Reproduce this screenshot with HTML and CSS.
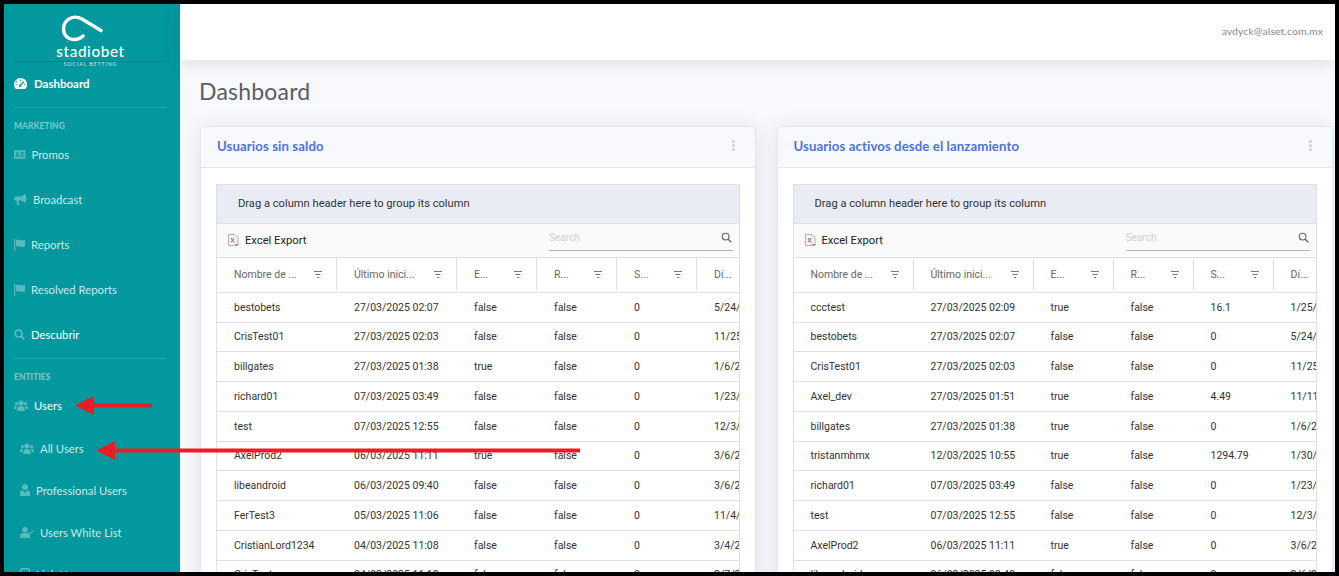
FILE: index.html
```html
<!DOCTYPE html>
<html lang="es">
<head>
<meta charset="utf-8">
<title>Dashboard</title>
<link rel="stylesheet" href="styles.css">
</head>
<body>
<svg class="sprite" width="0" height="0">
  <symbol id="i-filter" viewBox="0 0 8 7"><path d="M0 .5h8M1.500 3.500h5M3 6.500h2" stroke="currentColor" stroke-width="1.100" fill="none"/></symbol>
  <symbol id="i-search" viewBox="0 0 12 12"><circle cx="5" cy="5" r="3.700" fill="none" stroke="currentColor" stroke-width="1.200"/><path d="M7.800 7.800l3.400 3.400" stroke="currentColor" stroke-width="1.500" fill="none"/></symbol>
  <symbol id="i-excel" viewBox="0 0 11 12"><path d="M.5.5h6.500l3 3v8h-9.500z" fill="#f6f4f2" stroke="#b9aea8"/><path d="M3 4l3 4.500M6 4l-3 4.500" stroke="#c0504d" stroke-width="1" fill="none"/><path d="M7 10.500h3.500" stroke="#8a9a9a"/></symbol>
  <symbol id="i-users" viewBox="0 0 14 11"><circle cx="7" cy="3" r="2.600" fill="currentColor"/><circle cx="2.400" cy="3.600" r="1.700" fill="currentColor"/><circle cx="11.600" cy="3.600" r="1.700" fill="currentColor"/><path d="M3.300 11V8.500C3.300 7 5 6 7 6s3.700 1 3.700 2.500V11zM0 9V7.500C0 6.300 1 5.800 2.300 5.800c.5 0 .8.100 1 .2-.7.600-1 1.400-1 2.500v.5zM14 9V7.500c0-1.200-1-1.700-2.300-1.700-.5 0-.8.100-1 .2.700.6 1 1.400 1 2.500v.5z" fill="currentColor"/></symbol>
  <symbol id="i-flag" viewBox="0 0 11 12"><path d="M0 0h1.300v12H0zM2 1c2.500-1 4.500 1 9 0v6.500c-4.500 1-6.500-1-9 0z" fill="currentColor"/></symbol>
</svg>

<div class="frame">
  <aside class="sidebar">
    <div class="brand">
      <svg class="brand-mark" viewBox="0 0 44 28" width="44" height="28"><path d="M41 16.500L22 5C13 0 3.500 6 3.500 15c0 7 5.500 11 10.500 10.500 4 0 7-1.500 9-3.500" fill="none" stroke="#fff" stroke-width="3.400" stroke-linecap="round"/></svg>
      <div class="brand-name">stadiobet</div>
      <div class="brand-tag">SOCIAL BETTING</div>
    </div>

    <a class="nav-item is-active">
      <svg class="nav-icon ic-white" width="13" height="11" viewBox="0 0 13 11"><path fill-rule="evenodd" d="M6.500 0A6.500 6.500 0 0 0 0 6.500C0 8 .5 9.500 1.400 10.600c.2.300.5.400.8.400h8.600c.3 0 .6-.1.800-.4A6.500 6.500 0 0 0 6.500 0zM6 1.500h1v1.400H6zM2.600 3l1 1-.7.700-1-1zM1.500 6.200h1.400v1H1.500zM10.100 6.200h1.400v1h-1.400zM9.400 3l1 1-3.300 3.600a1.200 1.200 0 1 1-1.100-.9z"/></svg>
      <span class="nav-label">Dashboard</span>
    </a>
    <div class="nav-divider nav-divider-tight"></div>

    <div class="nav-heading">Marketing</div>
    <a class="nav-item">
      <svg class="nav-icon" width="11.500" height="9" viewBox="0 0 12 9"><path fill-rule="evenodd" d="M0 0h12v9H0zM3 2L1.500 7h1.100l.3-1h1.400l.3 1h1.100L4.200 2zM3.200 5l.4-1.500L4 5zM7 2v5h1.700C10 7 10.700 6 10.700 4.500S10 2 8.700 2zM8 3h.6c.7 0 1 .6 1 1.500S9.300 6 8.600 6H8z"/></svg>
      <span class="nav-label">Promos</span>
    </a>
    <a class="nav-item">
      <svg class="nav-icon" width="13" height="11" viewBox="0 0 13 11"><path d="M12 0L7 2.500H2A2 2 0 0 0 0 4.500 2 2 0 0 0 2 6.500h.4l.8 4.500h2.200L4.600 6.500H7L12 9zM12.500 3.500h.5v2h-.5z"/></svg>
      <span class="nav-label">Broadcast</span>
    </a>
    <a class="nav-item">
      <svg class="nav-icon" width="11" height="12"><use href="#i-flag"/></svg>
      <span class="nav-label">Reports</span>
    </a>
    <a class="nav-item">
      <svg class="nav-icon" width="11" height="12"><use href="#i-flag"/></svg>
      <span class="nav-label">Resolved Reports</span>
    </a>
    <a class="nav-item is-bright">
      <svg class="nav-icon" width="11" height="11" viewBox="0 0 12 12"><circle cx="5" cy="5" r="3.800" fill="none" stroke="currentColor" stroke-width="2"/><path d="M7.800 7.800l3.400 3.400" stroke="currentColor" stroke-width="2.200" fill="none"/></svg>
      <span class="nav-label">Descubrir</span>
    </a>
    <div class="nav-divider nav-divider-tight"></div>

    <div class="nav-heading">Entities</div>
    <a class="nav-item is-bright">
      <svg class="nav-icon" width="14" height="11"><use href="#i-users"/></svg>
      <span class="nav-label">Users</span>
    </a>
    <a class="nav-item nav-sub">
      <svg class="nav-icon" width="14" height="11"><use href="#i-users"/></svg>
      <span class="nav-label">All Users</span>
    </a>
    <a class="nav-item nav-sub">
      <svg class="nav-icon" width="10" height="12" viewBox="0 0 10 12"><circle cx="5" cy="3" r="3"/><path d="M0 12V9c0-1.700 1.300-2.800 3-2.800L5 9l2-2.800c1.700 0 3 1.100 3 2.800v3z"/></svg>
      <span class="nav-label">Professional Users</span>
    </a>
    <a class="nav-item nav-sub">
      <svg class="nav-icon" width="14" height="11" viewBox="0 0 14 11"><circle cx="5" cy="2.800" r="2.800"/><path d="M0 11V9c0-1.800 1.500-3 3.200-3h3.600C8.500 6 10 7.200 10 9v2zM9 5l1 1 3-3 .8.800L10 7.500 8.200 5.800z"/></svg>
      <span class="nav-label">Users White List</span>
    </a>
    <a class="nav-item nav-sub">
      <svg class="nav-icon" width="10" height="12" viewBox="0 0 10 12"><path fill-rule="evenodd" d="M0 1.500A1.500 1.500 0 0 1 1.500 0h7A1.500 1.500 0 0 1 10 1.500v9A1.500 1.500 0 0 1 8.500 12h-7A1.500 1.500 0 0 1 0 10.500zM1.500 1.500v9h7v-9z"/></svg>
      <span class="nav-label">Link Users</span>
    </a>
  </aside>

  <div class="main">
    <header class="topbar"><span class="user-email">avdyck@alset.com.mx</span></header>
    <main class="content">
      <h1 class="page-title">Dashboard</h1>
      <div class="cards">

        <section class="card">
          <div class="card-head">
            <h2 class="card-title">Usuarios sin saldo</h2>
            <span class="kebab"><i></i><i></i><i></i></span>
          </div>
          <div class="card-body">
            <div class="grid">
              <div class="group-drop">Drag a column header here to group its column</div>
              <div class="toolbar">
                <span class="export"><svg width="11" height="12"><use href="#i-excel"/></svg>Excel Export</span>
                <span class="search"><span class="search-ph">Search</span><svg class="search-ic" width="11" height="11"><use href="#i-search"/></svg></span>
              </div>
              <div class="row row-head">
                <div class="th"><span>Nombre de ...</span><svg width="8" height="7"><use href="#i-filter"/></svg></div>
                <div class="th"><span>Último inici...</span><svg width="8" height="7"><use href="#i-filter"/></svg></div>
                <div class="th"><span>E...</span><svg width="8" height="7"><use href="#i-filter"/></svg></div>
                <div class="th"><span>R...</span><svg width="8" height="7"><use href="#i-filter"/></svg></div>
                <div class="th"><span>S...</span><svg width="8" height="7"><use href="#i-filter"/></svg></div>
                <div class="th"><span>Dí...</span></div>
              </div>
              <div class="row"><div>bestobets</div><div>27/03/2025 02:07</div><div>false</div><div>false</div><div>0</div><div>5/24/2024</div></div>
              <div class="row"><div>CrisTest01</div><div>27/03/2025 02:03</div><div>false</div><div>false</div><div>0</div><div>11/25/2024</div></div>
              <div class="row"><div>billgates</div><div>27/03/2025 01:38</div><div>true</div><div>false</div><div>0</div><div>1/6/2025</div></div>
              <div class="row"><div>richard01</div><div>07/03/2025 03:49</div><div>false</div><div>false</div><div>0</div><div>1/23/2025</div></div>
              <div class="row"><div>test</div><div>07/03/2025 12:55</div><div>false</div><div>false</div><div>0</div><div>12/3/2024</div></div>
              <div class="row"><div>AxelProd2</div><div>06/03/2025 11:11</div><div>true</div><div>false</div><div>0</div><div>3/6/2025</div></div>
              <div class="row"><div>libeandroid</div><div>06/03/2025 09:40</div><div>false</div><div>false</div><div>0</div><div>3/6/2025</div></div>
              <div class="row"><div>FerTest3</div><div>05/03/2025 11:06</div><div>false</div><div>false</div><div>0</div><div>11/4/2024</div></div>
              <div class="row"><div>CristianLord1234</div><div>04/03/2025 11:08</div><div>false</div><div>false</div><div>0</div><div>3/4/2025</div></div>
              <div class="row"><div>CrisTest</div><div>04/03/2025 11:13</div><div>false</div><div>false</div><div>0</div><div>3/7/2025</div></div>
            </div>
          </div>
        </section>

        <section class="card">
          <div class="card-head">
            <h2 class="card-title">Usuarios activos desde el lanzamiento</h2>
            <span class="kebab"><i></i><i></i><i></i></span>
          </div>
          <div class="card-body">
            <div class="grid">
              <div class="group-drop">Drag a column header here to group its column</div>
              <div class="toolbar">
                <span class="export"><svg width="11" height="12"><use href="#i-excel"/></svg>Excel Export</span>
                <span class="search"><span class="search-ph">Search</span><svg class="search-ic" width="11" height="11"><use href="#i-search"/></svg></span>
              </div>
              <div class="row row-head">
                <div class="th"><span>Nombre de ...</span><svg width="8" height="7"><use href="#i-filter"/></svg></div>
                <div class="th"><span>Último inici...</span><svg width="8" height="7"><use href="#i-filter"/></svg></div>
                <div class="th"><span>E...</span><svg width="8" height="7"><use href="#i-filter"/></svg></div>
                <div class="th"><span>R...</span><svg width="8" height="7"><use href="#i-filter"/></svg></div>
                <div class="th"><span>S...</span><svg width="8" height="7"><use href="#i-filter"/></svg></div>
                <div class="th"><span>Dí...</span></div>
              </div>
              <div class="row"><div>ccctest</div><div>27/03/2025 02:09</div><div>true</div><div>false</div><div>16.1</div><div>1/25/2025</div></div>
              <div class="row"><div>bestobets</div><div>27/03/2025 02:07</div><div>false</div><div>false</div><div>0</div><div>5/24/2024</div></div>
              <div class="row"><div>CrisTest01</div><div>27/03/2025 02:03</div><div>false</div><div>false</div><div>0</div><div>11/25/2024</div></div>
              <div class="row"><div>Axel_dev</div><div>27/03/2025 01:51</div><div>true</div><div>false</div><div>4.49</div><div>11/11/2024</div></div>
              <div class="row"><div>billgates</div><div>27/03/2025 01:38</div><div>true</div><div>false</div><div>0</div><div>1/6/2025</div></div>
              <div class="row"><div>tristanmhmx</div><div>12/03/2025 10:55</div><div>true</div><div>false</div><div>1294.79</div><div>1/30/2025</div></div>
              <div class="row"><div>richard01</div><div>07/03/2025 03:49</div><div>false</div><div>false</div><div>0</div><div>1/23/2025</div></div>
              <div class="row"><div>test</div><div>07/03/2025 12:55</div><div>false</div><div>false</div><div>0</div><div>12/3/2024</div></div>
              <div class="row"><div>AxelProd2</div><div>06/03/2025 11:11</div><div>true</div><div>false</div><div>0</div><div>3/6/2025</div></div>
              <div class="row"><div>libeandroid</div><div>06/03/2025 09:40</div><div>false</div><div>false</div><div>0</div><div>3/6/2025</div></div>
            </div>
          </div>
        </section>

      </div>
    </main>
  </div>

  <svg class="arrows" width="1339" height="576" viewBox="0 0 1339 576">
    <path d="M75 405.500L94 396v7.500h58v4H94V415z" fill="#ed1c24"/>
    <path d="M96 450.500L115 441v7.500h465v4H115V460z" fill="#ed1c24"/>
  </svg>
</div>
</body>
</html>
```

FILE: styles.css
```css
* { box-sizing: border-box; }

html, body {
  margin: 0;
  height: 100%;
  overflow: hidden;
  background: #000;
}

.sprite { position: absolute; }

.frame {
  position: relative;
  display: flex;
  width: 1339px;
  height: 576px;
  border: 4px solid #000;
  overflow: hidden;
  font-family: Lato, "Open Sans", sans-serif;
}

/* Sidebar */
.sidebar {
  flex: 0 0 176px;
  height: 600px;
  background: #03989e;
  color: #fff;
}

.brand {
  display: flex;
  flex-direction: column;
  align-items: center;
  width: 153px;
  height: 58px;
  margin-left: 10px;
  padding-top: 10px;
  border-bottom: 1px solid rgba(0, 60, 70, .25);
}

.brand-mark { flex: none; display: block; margin-right: 17px; }

.brand-name {
  flex: none;
  margin-top: 1px;
  font-size: 15.300px;
  line-height: 16px;
  font-weight: 500;
  letter-spacing: .6px;
  color: #fff;
}

.brand-tag {
  flex: none;
  margin-top: 2px;
  font-size: 5px;
  line-height: 6px;
  letter-spacing: 1px;
  color: rgba(255, 255, 255, .8);
}

.nav-item {
  display: flex;
  align-items: center;
  gap: 6px;
  height: 45px;
  padding-left: 10px;
  font-size: 11.300px;
  color: rgba(255, 255, 255, .8);
}

.nav-sub { height: 42px; padding-left: 16px; }
.is-bright + .nav-sub { margin-top: -1px; }

.nav-icon { flex: none; fill: currentColor; color: rgba(255, 255, 255, .33); }
.nav-icon.ic-white { color: #fff; }

.is-active {
  height: 44px;
  gap: 7px;
  padding-bottom: 1px;
  font-size: 11.500px;
  font-weight: 700;
  color: #fff;
}
.is-bright { color: #fff; }

.nav-divider {
  height: 1px;
  margin: 0 13px 0 10px;
  background: rgba(255, 255, 255, .14);
}
.nav-divider-tight { margin-top: 1px; }

.nav-heading {
  padding: 12px 0 0 10px;
  font-size: 8.500px;
  line-height: 12px;
  font-weight: 900;
  text-transform: uppercase;
  color: rgba(255, 255, 255, .45);
}

/* Main column */
.main {
  flex: 1;
  min-width: 0;
  display: flex;
  flex-direction: column;
  background: #f8f9fc;
}

.topbar {
  flex: none;
  position: relative;
  display: flex;
  justify-content: flex-end;
  align-items: flex-start;
  height: 56px;
  padding: 21px 12px 0 0;
  background: #fff;
  box-shadow: 0 4px 18px rgba(58, 59, 69, .13);
}

.user-email {
  font-size: 10.400px;
  line-height: 12px;
  letter-spacing: .1px;
  color: #858796;
}

.content { flex: 1; padding: 0 3px 0 20px; }

.page-title {
  margin: 0 0 0 -1px;
  padding-top: 18px;
  height: 66px;
  font-size: 23px;
  line-height: 27px;
  font-weight: 400;
  letter-spacing: .2px;
  color: #5a5c69;
}

.cards { display: flex; gap: 20.500px; }

.card {
  flex: 0 0 556px;
  height: 500px;
  background: #fff;
  border: 1px solid #e3e6f0;
  border-radius: 4px;
  box-shadow: 0 3px 22px rgba(58, 59, 69, .12);
}

.card-head {
  display: flex;
  justify-content: space-between;
  align-items: center;
  height: 41px;
  padding: 0 20px 3px 16px;
  background: #f8f9fc;
  border-bottom: 1px solid #e3e6f0;
  border-radius: 4px 4px 0 0;
}

.card-title {
  margin: 0;
  font-size: 13.200px;
  font-weight: 700;
  letter-spacing: .1px;
  color: #4e73df;
}

.kebab { display: flex; flex-direction: column; gap: 1px; }
.kebab i { width: 3px; height: 3px; border-radius: 50%; background: #cdd0dc; }

.card-body { padding: 16px 15px; }

/* Grid */
.grid {
  width: 524px;
  height: 420px;
  overflow: hidden;
  border: 1px solid #e0e0e0;
  font-family: Roboto, sans-serif;
  color: #333;
}

.group-drop {
  display: flex;
  align-items: center;
  height: 38.500px;
  padding-left: 21px;
  background: #e9ecf5;
  border-bottom: 1px solid #e0e0e0;
  font-size: 11.150px;
  color: #333;
}

.toolbar {
  display: flex;
  justify-content: space-between;
  height: 34.500px;
  background: #fafafa;
  border-bottom: 1px solid #e0e0e0;
}

.export {
  display: flex;
  align-items: center;
  gap: 6px;
  padding-left: 11px;
  font-size: 11.200px;
  color: #222;
}

.search {
  display: flex;
  justify-content: space-between;
  align-items: center;
  width: 184px;
  height: 27px;
  margin-right: 6px;
  border-bottom: 1px solid #b5b5b5;
  padding: 2px 1px 0 0;
}
.search-ph { font-size: 10.100px; color: #d0d0d0; }
.search-ic { color: #666; margin-bottom: 1px; }

.row {
  display: grid;
  grid-template-columns: 120px 120px 80px 80px 80px 80px;
  height: 29.750px;
  border-bottom: 1px solid #e0e0e0;
  font-size: 10.500px;
}

.row > div {
  display: flex;
  align-items: center;
  padding-left: 17px;
  white-space: nowrap;
}

.row-head { height: 34.750px; padding-bottom: 1px; color: #666; }

.row-head .th {
  justify-content: space-between;
  padding-right: 14px;
  border-right: 1px solid #e0e0e0;
}
.row-head .th:last-child { border-right: 0; }
.th svg { flex: none; color: #777; }

/* Annotation arrows drawn on top of the screenshot */
.arrows {
  position: absolute;
  top: -4px;
  left: -4px;
  pointer-events: none;
}
```
